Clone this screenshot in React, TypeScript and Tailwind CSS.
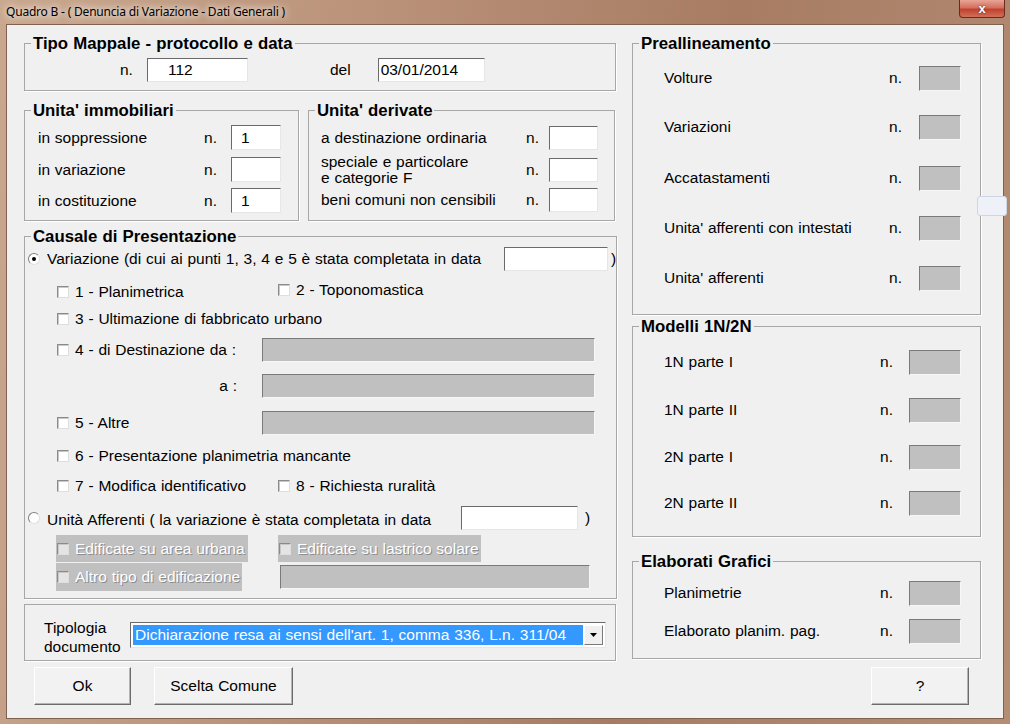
import React from 'react';

interface GroupProps {
  title?: string;
  className?: string;
  children?: React.ReactNode;
}

const GroupBox: React.FC<GroupProps> = ({ title, className = '', children }) => (
  <fieldset className={`border border-[#a7a7a7] shadow-[1px_1px_0_#ffffff] ${className}`}>
    {title && (
      <legend className="ml-[6px] px-[2px] text-[16.8px] font-bold leading-[19px]">{title}</legend>
    )}
    {children}
  </fieldset>
);

const TextBox: React.FC<{ className?: string; value?: string }> = ({ className = '', value }) => (
  <div
    className={`h-[24px] bg-white border border-t-[#6a6a6a] border-l-[#6a6a6a] border-b-[#e6e6e6] border-r-[#e6e6e6] flex items-center leading-none ${className}`}
  >
    {value}
  </div>
);

const GrayBox: React.FC<{ className?: string }> = ({ className = '' }) => (
  <div
    className={`bg-[#c0c0c0] border border-t-[#7a7a7a] border-l-[#7a7a7a] border-b-[#f7f7f7] border-r-[#f7f7f7] ${className}`}
  />
);

const Check: React.FC<{ disabled?: boolean }> = ({ disabled }) => (
  <span
    className={`inline-block w-[12px] h-[12px] shrink-0 border border-t-[#8a8a8a] border-l-[#8a8a8a] border-b-[#dedede] border-r-[#dedede] ${
      disabled ? 'bg-[#e4e4e4]' : 'bg-white'
    } shadow-[inset_1px_1px_0_#c8c8c8]`}
  />
);

const Radio: React.FC<{ checked?: boolean }> = ({ checked }) => (
  <span className="inline-flex w-[12px] h-[12px] shrink-0 items-center justify-center rounded-full border border-t-[#808080] border-l-[#808080] border-b-[#e0e0e0] border-r-[#e0e0e0] bg-white">
    {checked && <span className="w-[4px] h-[4px] rounded-full bg-black" />}
  </span>
);

const Button: React.FC<{ label: string; className?: string }> = ({ label, className = '' }) => (
  <div
    className={`h-[38px] flex items-center justify-center bg-[#f2f2f2] border border-t-white border-l-white border-b-[#6b6b6b] border-r-[#6b6b6b] shadow-[inset_-1px_-1px_0_#b4b4b4] ${className}`}
  >
    {label}
  </div>
);

const NumRow: React.FC<{ label: string; boxW: string; gap: string; className?: string }> = ({
  label,
  boxW,
  gap,
  className = '',
}) => (
  <div className={`flex items-center h-[26px] pl-[31px] pr-[19px] ${className}`}>
    <span className="flex-1">{label}</span>
    <span>n.</span>
    <GrayBox className={`h-[25px] ${boxW} ${gap}`} />
  </div>
);

const Disabled: React.FC<{ label: string; className?: string }> = ({ label, className = '' }) => (
  <div className={`h-full bg-[#c0c0c0] flex items-center pl-[1px] ${className}`}>
    <Check disabled />
    <span className="ml-[6px] text-white [text-shadow:1px_1px_0_#8c8c8c] whitespace-nowrap">{label}</span>
  </div>
);

export default function App() {
  return (
    <div className="relative w-[1010px] h-[724px] overflow-hidden flex flex-col font-['Liberation_Sans',Arial,sans-serif] text-[15.5px] [word-spacing:0.5px] text-black bg-[linear-gradient(100deg,#c9a88f_0%,#b99178_35%,#a77c63_65%,#b48d74_100%)]">
      {/* title bar */}
      <div className="h-[24px] flex items-start justify-between shrink-0">
        <span className="ml-[6px] mt-[4px] text-[12px] leading-[16px] text-black [word-spacing:0px] [text-shadow:0_0_6px_#ffffff,0_0_10px_#f2e6dc] font-['Noto_Sans',sans-serif] tracking-[-0.2px]">
          Quadro B - ( Denuncia di Variazione - Dati Generali )
        </span>
        <div className="mr-[5px] w-[46px] h-[18px] rounded-b-[4px] border border-t-0 border-[#6b2a1e] bg-[linear-gradient(180deg,#e8a595_0%,#d2705e_45%,#c2412c_55%,#d0705a_100%)] flex items-center justify-center text-white font-bold text-[13px] leading-none [text-shadow:0_0_2px_#5a1a10]">
          x
        </div>
      </div>

      {/* client area */}
      <div className="mx-[6px] mb-[5px] flex-1 bg-[#f0f0f0] border border-[#80604f] flex gap-[16px] pl-[17px] pt-[9px]">
        {/* left column */}
        <div className="w-[592px] flex flex-col">
          <GroupBox title="Tipo Mappale - protocollo e data" className="h-[57px]">
            <div className="flex items-center mt-[5px] h-[24px]">
              <span className="ml-[95px]">n.</span>
              <TextBox className="ml-[14px] w-[101px] pl-[20px]" value="112" />
              <span className="ml-[82px]">del</span>
              <TextBox className="ml-[27px] w-[107px] pl-[2px]" value="03/01/2014" />
            </div>
          </GroupBox>

          <div className="flex gap-[9px] mt-[10px]">
            <GroupBox title="Unita' immobiliari" className="w-[275px] h-[120px]">
              <div className="flex flex-col mt-[5px]">
                {[
                  ['in soppressione', '1', ''],
                  ['in variazione', '', 'mt-[7px]'],
                  ['in costituzione', '1', 'mt-[6px]'],
                ].map(([label, v, m]) => (
                  <div key={label} className={`flex items-center h-[25px] pl-[13px] pr-[17px] ${m}`}>
                    <span className="flex-1">{label}</span>
                    <span>n.</span>
                    <TextBox className="ml-[14px] w-[50px] h-[25px] pl-[9px]" value={v} />
                  </div>
                ))}
              </div>
            </GroupBox>

            <GroupBox title="Unita' derivate" className="w-[307px] h-[120px]">
              <div className="flex flex-col mt-[6px]">
                <div className="flex items-center h-[24px] pl-[12px] pr-[16px]">
                  <span className="flex-1">a destinazione ordinaria</span>
                  <span>n.</span>
                  <TextBox className="ml-[10px] w-[49px]" />
                </div>
                <div className="flex items-center h-[24px] pl-[12px] pr-[16px] mt-[8px]">
                  <span className="flex-1 leading-[16px]">
                    speciale e particolare
                    <br />e categorie F
                  </span>
                  <span>n.</span>
                  <TextBox className="ml-[10px] w-[49px]" />
                </div>
                <div className="flex items-center h-[24px] pl-[12px] pr-[16px] mt-[6px]">
                  <span className="flex-1">beni comuni non censibili</span>
                  <span>n.</span>
                  <TextBox className="ml-[10px] w-[49px]" />
                </div>
              </div>
            </GroupBox>
          </div>

          <GroupBox title="Causale di Presentazione" className="mt-[6px] h-[372px]">
            <div className="flex flex-col whitespace-nowrap">
              <div className="flex items-center h-[26px] pl-[3px]">
                <Radio checked />
                <span className="ml-[7px] w-[457px]">
                  Variazione (di cui ai punti 1, 3, 4 e 5 è stata completata in data
                </span>
                <TextBox className="w-[104px]" />
                <span className="ml-[3px]">)</span>
              </div>

              <div className="flex items-center h-[26px] mt-[5px]">
                <div className="w-[253px] flex items-center pl-[32px] pt-[4px]">
                  <Check />
                  <span className="ml-[6px]">1 - Planimetrica</span>
                </div>
                <Check />
                <span className="ml-[6px]">2 - Toponomastica</span>
              </div>

              <div className="flex items-center h-[26px] mt-[3px] pl-[32px]">
                <Check />
                <span className="ml-[6px]">3 - Ultimazione di fabbricato urbano</span>
              </div>

              <div className="flex items-center h-[26px] mt-[5px]">
                <div className="w-[237px] flex items-center pl-[32px]">
                  <Check />
                  <span className="ml-[6px]">4 - di Destinazione da :</span>
                </div>
                <GrayBox className="w-[333px] h-[24px]" />
              </div>

              <div className="flex items-center h-[26px] mt-[10px]">
                <div className="w-[237px] text-right pr-[25px]">a :</div>
                <GrayBox className="w-[333px] h-[24px]" />
              </div>

              <div className="flex items-center h-[26px] mt-[11px]">
                <div className="w-[237px] flex items-center pl-[32px]">
                  <Check />
                  <span className="ml-[6px]">5 - Altre</span>
                </div>
                <GrayBox className="w-[333px] h-[24px]" />
              </div>

              <div className="flex items-center h-[26px] mt-[7px] pl-[32px]">
                <Check />
                <span className="ml-[6px]">6 - Presentazione planimetria mancante</span>
              </div>

              <div className="flex items-center h-[26px] mt-[4px]">
                <div className="w-[253px] flex items-center pl-[32px]">
                  <Check />
                  <span className="ml-[6px]">7 - Modifica identificativo</span>
                </div>
                <Check />
                <span className="ml-[6px]">8 - Richiesta ruralità</span>
              </div>

              <div className="flex items-center h-[26px] mt-[6px] pl-[3px]">
                <Radio />
                <span className="ml-[7px] w-[414px] pt-[3px]">
                  Unità Afferenti ( la variazione è stata completata in data
                </span>
                <TextBox className="w-[117px]" />
                <span className="ml-[7px]">)</span>
              </div>

              <div className="flex h-[27px] mt-[4px] pl-[31px]">
                <Disabled label="Edificate su area urbana" className="w-[192px]" />
                <Disabled label="Edificate su lastrico solare" className="w-[203px] ml-[30px]" />
              </div>

              <div className="flex items-center h-[28px] mt-[1px] pl-[31px]">
                <Disabled label="Altro tipo di edificazione" className="w-[186px]" />
                <GrayBox className="ml-[38px] w-[310px] h-[24px]" />
              </div>
            </div>
          </GroupBox>

          <div className="mt-[5px] h-[57px] border border-[#a7a7a7] shadow-[1px_1px_0_#ffffff] flex items-start">
            <div className="w-[105px] pl-[19px] pt-[13px] leading-[19px]">
              Tipologia
              <br />
              documento
            </div>
            <div className="mt-[17px] w-[476px] h-[26px] bg-white border border-t-[#6a6a6a] border-l-[#6a6a6a] border-b-[#e6e6e6] border-r-[#e6e6e6] flex items-stretch p-[2px]">
              <div className="flex-1 bg-[#3399ff] text-white flex items-center pl-[2px] whitespace-nowrap overflow-hidden">
                Dichiarazione resa ai sensi dell'art. 1, comma 336, L.n. 311/04
              </div>
              <div className="w-[19px] ml-[1px] bg-[#f0f0f0] border border-t-white border-l-white border-b-[#7a7a7a] border-r-[#7a7a7a] flex items-center justify-center">
                <svg width="7" height="4" viewBox="0 0 7 4">
                  <path d="M0 0h7L3.5 4z" fill="#000" />
                </svg>
              </div>
            </div>
          </div>

          <div className="flex mt-[6px]">
            <Button label="Ok" className="ml-[10px] w-[97px]" />
            <Button label="Scelta Comune" className="ml-[23px] w-[139px]" />
          </div>
        </div>

        {/* right column */}
        <div className="w-[349px] flex flex-col">
          <GroupBox title="Preallineamento" className="h-[281px]">
            <div className="flex flex-col">
              <NumRow label="Volture" boxW="w-[42px]" gap="ml-[17px]" className="mt-[12px]" />
              <NumRow label="Variazioni" boxW="w-[42px]" gap="ml-[17px]" className="mt-[23px]" />
              <NumRow label="Accatastamenti" boxW="w-[42px]" gap="ml-[17px]" className="mt-[25px]" />
              <NumRow label="Unita' afferenti con intestati" boxW="w-[42px]" gap="ml-[17px]" className="mt-[24px]" />
              <NumRow label="Unita' afferenti" boxW="w-[42px]" gap="ml-[17px]" className="mt-[24px]" />
            </div>
          </GroupBox>

          <GroupBox title="Modelli 1N/2N" className="mt-[2px] h-[220px]">
            <div className="flex flex-col">
              <NumRow label="1N parte I" boxW="w-[52px]" gap="ml-[16px]" className="mt-[13px]" />
              <NumRow label="1N parte II" boxW="w-[52px]" gap="ml-[16px]" className="mt-[22px]" />
              <NumRow label="2N parte I" boxW="w-[52px]" gap="ml-[16px]" className="mt-[21px]" />
              <NumRow label="2N parte II" boxW="w-[52px]" gap="ml-[16px]" className="mt-[20px]" />
            </div>
          </GroupBox>

          <GroupBox title="Elaborati Grafici" className="mt-[15px] h-[107px]">
            <div className="flex flex-col">
              <NumRow label="Planimetrie" boxW="w-[52px]" gap="ml-[16px]" className="mt-[9px]" />
              <NumRow label="Elaborato planim. pag." boxW="w-[52px]" gap="ml-[16px]" className="mt-[12px]" />
            </div>
          </GroupBox>

          <Button label="?" className="mt-[8px] ml-[239px] w-[98px]" />
        </div>
      </div>

      {/* stray tooltip edge at right border */}
      <div className="absolute left-[977px] top-[196px] w-[30px] h-[20px] rounded-[3px] bg-[#eef2f8] border border-[#cdd6e2]" />
    </div>
  );
}
